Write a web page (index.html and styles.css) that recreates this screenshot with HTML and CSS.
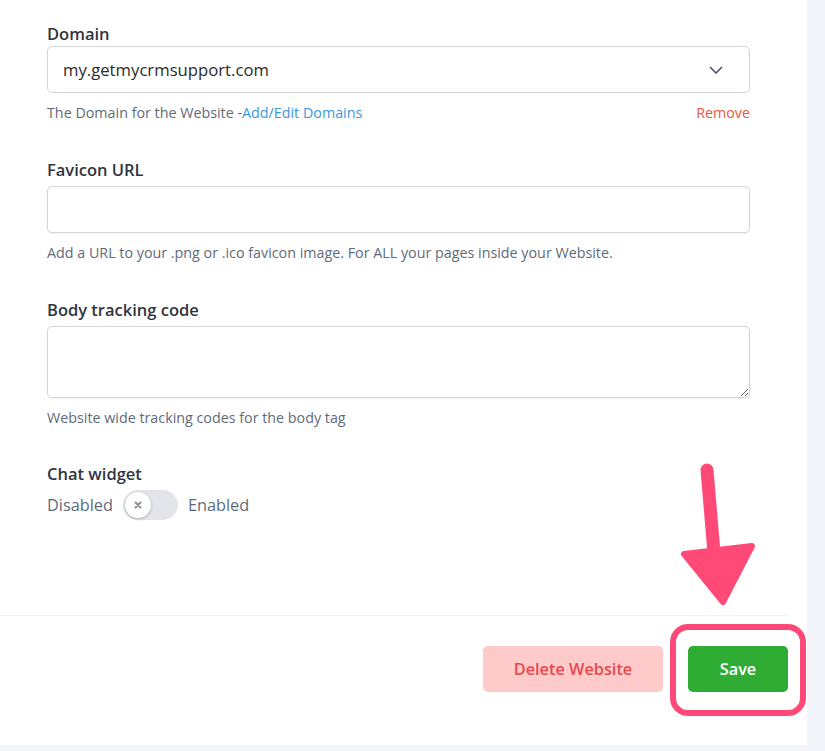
FILE: index.html
```html
<!DOCTYPE html>
<html lang="en">
<head>
<meta charset="utf-8">
<title>Website settings</title>
<link rel="stylesheet" href="styles.css">
</head>
<body>
<div class="page">
  <div class="card">
    <div class="form">
      <div class="field field-domain">
        <label class="label">Domain</label>
        <div class="select">
          <span class="select-value">my.getmycrmsupport.com</span>
          <svg class="chevron" width="14" height="8" viewBox="0 0 14 8"><path d="M1 1l6 6 6-6" fill="none" stroke="#4a5568" stroke-width="1.6"/></svg>
        </div>
        <div class="help help-split">
          <span>The Domain for the Website -<a class="link" href="#">Add/Edit Domains</a></span>
          <a class="remove" href="#">Remove</a>
        </div>
      </div>

      <div class="field">
        <label class="label">Favicon URL</label>
        <input class="input" type="text">
        <div class="help">Add a URL to your .png or .ico favicon image. For ALL your pages inside your Website.</div>
      </div>

      <div class="field field-body">
        <label class="label">Body tracking code</label>
        <textarea class="textarea"></textarea>
        <div class="help">Website wide tracking codes for the body tag</div>
      </div>

      <div class="field">
        <label class="label">Chat widget</label>
        <div class="toggle-row">
          <span class="toggle-text">Disabled</span>
          <span class="toggle">
            <span class="knob">
              <svg width="8" height="8" viewBox="0 0 8 8"><path d="M1.5 1.5l5 5M6.5 1.5l-5 5" stroke="#8a8f98" stroke-width="2" stroke-linecap="round"/></svg>
            </span>
          </span>
          <span class="toggle-text">Enabled</span>
        </div>
      </div>
    </div>

    <div class="footer">
      <button class="btn btn-delete">Delete Website</button>
      <button class="btn btn-save">Save</button>
    </div>

    <svg class="annotation" width="160" height="260" viewBox="0 0 160 260">
      <line x1="37" y1="12" x2="44" y2="95" stroke="#ff4a78" stroke-width="13" stroke-linecap="round"/>
      <path d="M14 96 L82 88 L53 144 Z" fill="#ff4a78" stroke="#ff4a78" stroke-width="6" stroke-linejoin="round"/>
      <rect x="3" y="169" width="130" height="86" rx="15" fill="none" stroke="#ff4a78" stroke-width="6"/>
    </svg>
  </div>
</div>
</body>
</html>
```

FILE: styles.css
```css
* { box-sizing: border-box; }

html, body {
  margin: 0;
  padding: 0;
  background: #f1f5f9;
}

body {
  font-family: "Open Sans", "Noto Sans", Arial, sans-serif;
  width: 825px;
  height: 751px;
  overflow: hidden;
}

.page {
  width: 825px;
  height: 751px;
  background: #f1f5f9;
}

.card {
  position: relative;
  width: 807px;
  height: 745px;
  background: #ffffff;
  display: flex;
  flex-direction: column;
}

.form {
  padding: 24px 57px 0 47px;
  flex: 1;
}

.field {
  margin-bottom: 38px;
}

.field-body {
  margin-bottom: 37px;
}

.label {
  display: block;
  font-size: 16.5px;
  line-height: 20px;
  font-weight: 600;
  color: #2f3542;
  margin-bottom: 6px;
}

.field-domain .label {
  margin-bottom: 2px;
}

.select {
  height: 47px;
  border: 1px solid #d4d4dc;
  border-radius: 5px;
  display: flex;
  align-items: center;
  justify-content: space-between;
  padding: 0 26px 0 15px;
}

.select-value {
  font-size: 16.7px;
  color: #2b2b2b;
}

.chevron {
  display: block;
}

.input {
  display: block;
  width: 100%;
  height: 47px;
  border: 1px solid #d4d4dc;
  border-radius: 5px;
  box-shadow: 0 1px 2px rgba(0, 0, 0, 0.06);
  font: inherit;
  outline: none;
}

.textarea {
  display: block;
  width: 100%;
  height: 72px;
  border: 1px solid #d4d4dc;
  border-radius: 5px;
  box-shadow: 0 1px 2px rgba(0, 0, 0, 0.06);
  font: inherit;
  outline: none;
  resize: vertical;
}

.help {
  margin-top: 11px;
  font-size: 14.3px;
  line-height: 18px;
  color: #5f6b7a;
}

.help-split {
  display: flex;
  justify-content: space-between;
}

.link {
  color: #3b96de;
  text-decoration: none;
}

.remove {
  color: #e8553e;
  text-decoration: none;
}

.toggle-row {
  display: flex;
  align-items: center;
  gap: 10px;
}

.toggle-text {
  font-size: 16.3px;
  color: #5f6b7a;
}

.toggle {
  width: 55px;
  height: 30px;
  border-radius: 15px;
  background: #e4e5ea;
  display: flex;
  align-items: center;
  padding-left: 2px;
}

.knob {
  width: 26px;
  height: 26px;
  border-radius: 50%;
  background: #ffffff;
  box-shadow: 0 1px 3px rgba(0, 0, 0, 0.25);
  display: flex;
  align-items: center;
  justify-content: center;
}

.knob svg {
  display: block;
}

.footer {
  margin-right: 19px;
  border-top: 1px solid #eef3f7;
  height: 130px;
  display: flex;
  justify-content: flex-end;
  align-items: flex-start;
  padding-top: 30px;
  gap: 25px;
}

.btn {
  font-family: inherit;
  font-size: 16.3px;
  font-weight: 600;
  border: none;
  border-radius: 5px;
  height: 46px;
  cursor: pointer;
}

.btn-delete {
  width: 180px;
  background: #fecaca;
  color: #e8484c;
}

.btn-save {
  width: 100px;
  background: #2fac34;
  color: #ffffff;
}

.annotation {
  position: absolute;
  left: 670px;
  top: 458px;
  pointer-events: none;
}
```
